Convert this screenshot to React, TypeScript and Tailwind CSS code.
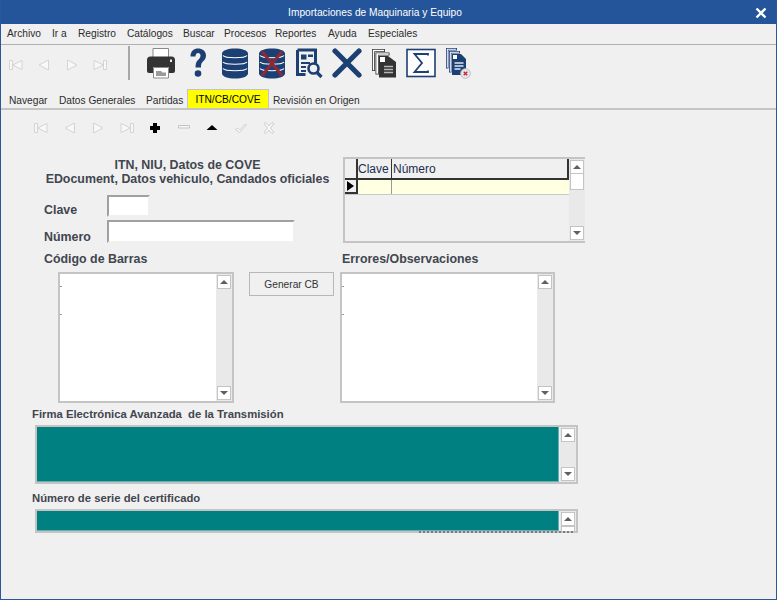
import type { ReactNode } from 'react';

const NAVY = '#1c3f74';
const DARK = '#333333';

const menus = [
  { label: 'Archivo', w: 'w-[45px]' },
  { label: 'Ir a', w: 'w-[26px]' },
  { label: 'Registro', w: 'w-[49px]' },
  { label: 'Catálogos', w: 'w-[56px]' },
  { label: 'Buscar', w: 'w-[41px]' },
  { label: 'Procesos', w: 'w-[51px]' },
  { label: 'Reportes', w: 'w-[53px]' },
  { label: 'Ayuda', w: 'w-[40px]' },
  { label: 'Especiales', w: 'w-[56px]' },
];

function Glyph({ children, w = 16, h = 16 }: { children: ReactNode; w?: number; h?: number }) {
  return (
    <svg width={w} height={h} viewBox={`0 0 ${w} ${h}`} className="block shrink-0">
      {children}
    </svg>
  );
}

// iconos deshabilitados de navegacion
const dim = { fill: '#f8f8f8', stroke: '#d4d4d4', strokeWidth: 1 };

const FirstIcon = () => (
  <Glyph>
    <path d="M1.500 3.500h3v9h-3zM14 3.500v9L4.500 8z" {...dim} />
  </Glyph>
);
const PrevIcon = () => (
  <Glyph>
    <path d="M12.500 3v10L3 8z" {...dim} />
  </Glyph>
);
const NextIcon = () => (
  <Glyph>
    <path d="M3.500 3v10L13 8z" {...dim} />
  </Glyph>
);
const LastIcon = () => (
  <Glyph>
    <path d="M11.500 3.500h3v9h-3zM2 3.500v9L11.500 8z" {...dim} />
  </Glyph>
);
const PlusIcon = () => (
  <Glyph>
    <path d="M6 3h4v3h3v4h-3v3H6v-3H3V6h3z" fill="#000" />
  </Glyph>
);
const MinusIcon = () => (
  <Glyph>
    <path d="M2.500 5.500h11v2.500h-11z" fill="#f8f8f8" stroke="#c4c4c4" />
  </Glyph>
);
const UpIcon = () => (
  <Glyph>
    <path d="M8 5l5.500 5h-11z" fill="#000" />
  </Glyph>
);
const CheckIcon = () => (
  <Glyph>
    <path d="M2.500 9.500l2-1.500 2 2 6-6 1 1-7 7.500z" fill="#f8f8f8" stroke="#cfcfcf" />
  </Glyph>
);
const CancelIcon = () => (
  <Glyph>
    <path d="M3 3.500l2-1 3 3.500 3-3.500 2 1-3.500 4.500 3.500 4.500-2 1-3-3.500-3 3.500-2-1L6.500 8z" fill="#f8f8f8" stroke="#cfcfcf" />
  </Glyph>
);

const PrinterIcon = () => (
  <Glyph w={30} h={32}>
    <path d="M7 1.500h15.500v9H7z" fill="#fff" stroke="#8a8a8a" />
    <path d="M4.500 9.500h21a3.500 3.500 0 0 1 3.500 3.500v11a2 2 0 0 1-2 2h-4v-6H7v6H3a2 2 0 0 1-2-2V13a3.500 3.500 0 0 1 3.500-3.500z" fill={DARK} />
    <rect x="24" y="12.500" width="2" height="2.500" fill="#eee" />
    <path d="M7.500 20.500h15v10.500h-15z" fill="#fff" stroke="#8a8a8a" />
    <path d="M10 24h5l1.500 1.500H20v3.500H10z" fill="#9a9a9a" />
  </Glyph>
);

const DbStack = () => (
  <>
    <path d="M1 6.500C1 3.500 7 1.500 14 1.500s13 2 13 5v20c0 3-6 5-13 5s-13-2-13-5z" fill={NAVY} />
    <path d="M2 8.500c2 3 22 3 24 0M2 15c2 3 22 3 24 0M2 21.500c2 3 22 3 24 0" fill="none" stroke="#fff" strokeWidth="1.200" />
  </>
);
const DbIcon = () => (
  <Glyph w={28} h={33}>
    <DbStack />
  </Glyph>
);
const DbXIcon = () => (
  <Glyph w={28} h={33}>
    <DbStack />
    <path d="M4 4.500l20 24M24 4.500l-20 24" stroke="#8e2a35" strokeWidth="3" />
  </Glyph>
);

const ReportIcon = () => (
  <Glyph w={28} h={31}>
    <path d="M2.500 2h18v13M2.500 2v24.500h8" fill="none" stroke={NAVY} strokeWidth="3" />
    <path d="M6 6.500h5.500v5H6zM13 6.500h5v2.500h-5zM6 14h9v2H6zM6 18h5v2H6zM6 22h5v2H6z" fill={NAVY} />
    <circle cx="18.500" cy="20.500" r="5" fill="#f0f0f0" stroke={NAVY} strokeWidth="2.600" />
    <path d="M22 24.500l4.500 4.500" stroke={NAVY} strokeWidth="3.200" />
  </Glyph>
);

const BigXIcon = () => (
  <Glyph w={30} h={30}>
    <path d="M3 3l24 24M27 3L3 27" stroke={NAVY} strokeWidth="5.200" strokeLinecap="round" />
  </Glyph>
);

const CopiesIcon = () => (
  <Glyph w={26} h={30}>
    <path d="M1 1h13v3H4v19H1z" fill={DARK} />
    <path d="M1.800 1.800h11.400v1.400H3.200v19H1.800z" fill="#fff" />
    <path d="M4.500 4.500h14v3H8v19H4.500z" fill={DARK} />
    <path d="M5.300 5.300h12.400v1.400H7.200v19H5.300z" fill="#fff" />
    <path d="M8 8h9l8 6v15.500H8z" fill={DARK} />
    <path d="M9 9h5v5H9z" fill="#fff" />
    <path d="M13 18.500h9M13 21.500h9M13 24.500h9" stroke="#b5b5b5" strokeWidth="1.600" />
  </Glyph>
);

const SigmaIcon = () => (
  <Glyph w={30} h={30}>
    <rect x="1" y="1.500" width="28" height="27" fill="#fdfdfd" stroke={NAVY} strokeWidth="1.600" />
    <path d="M22 7.500V6H8.500l7.500 9-7.500 9H22v-1.500" fill="none" stroke={NAVY} strokeWidth="1.800" />
  </Glyph>
);

const DocXIcon = () => (
  <Glyph w={26} h={32}>
    <path d="M1 1h11v2.500H3.500v18H1z" fill={NAVY} />
    <path d="M1.800 1.800h9.400v1H2.800v18h-1z" fill="#fff" />
    <path d="M4 4h11v2.500H6.500v19H4z" fill={NAVY} />
    <path d="M4.800 4.800h9.400v1H5.800v19h-1z" fill="#fff" />
    <path d="M7 7h9l5 5v16H7z" fill={NAVY} />
    <path d="M8 8h4v4H8z" fill="#fff" />
    <path d="M9.500 16h9M9.500 19h9M9.500 22h6" stroke="#dfe6f0" strokeWidth="1.300" />
    <circle cx="20.500" cy="26.500" r="4.800" fill="#e8e8e8" stroke="#b8bcc4" />
    <path d="M18.700 24.700l3.600 3.600M22.300 24.700l-3.600 3.600" stroke="#c8283a" strokeWidth="1.400" />
  </Glyph>
);

const Ticks = ({ className }: { className: string }) => (
  <span className={`absolute w-[2px] h-[1px] bg-[#9a9a9a] ${className}`} />
);

function ScrollButton({ down = false, className = '' }: { down?: boolean; className?: string }) {
  return (
    <div className={`w-[14px] h-[14px] bg-white border border-[#c4c4c4] flex items-center justify-center shrink-0 ${className}`}>
      <div
        className={`w-0 h-0 border-l-[4px] border-r-[4px] border-l-transparent border-r-transparent ${
          down ? 'border-t-[4px] border-t-[#606060]' : 'border-b-[4px] border-b-[#606060]'
        }`}
      />
    </div>
  );
}

function ScrollBar({ thumb = false }: { thumb?: boolean }) {
  return (
    <div className="w-[16px] shrink-0 bg-[#e9e9e9] flex flex-col items-center justify-between py-px">
      <div className="flex flex-col">
        <ScrollButton />
        {thumb && <div className="w-[14px] h-[16px] bg-white border border-[#c4c4c4] border-t-0" />}
      </div>
      <ScrollButton down />
    </div>
  );
}

function ListBox({ className }: { className: string }) {
  return (
    <div className={`relative flex border-2 border-[#c4c4c4] bg-white ${className}`}>
      <Ticks className="left-0 top-[12px]" />
      <Ticks className="left-0 top-[40px]" />
      <div className="flex-1" />
      <ScrollBar />
    </div>
  );
}

function TealBox({ className, short = false }: { className: string; short?: boolean }) {
  return (
    <div className={`relative flex border-2 border-[#c4c4c4] bg-[#efefef] w-[543px] ${className}`}>
      <div className="w-[522px] bg-[#008080] shrink-0 border-r border-b border-[#6aaeae]" />
      <div className="w-[2px]" />
      {short ? (
        <>
          <div className="w-[16px] shrink-0 bg-[#e9e9e9] flex flex-col items-center overflow-hidden pt-px">
            <ScrollButton />
            <div className="w-[14px] h-[6px] bg-white border border-[#c4c4c4] shrink-0" />
          </div>
          {/* texto recortado que asoma debajo del campo */}
          <div className="absolute left-[382px] bottom-[-2px] w-[156px] h-[2px] bg-[repeating-linear-gradient(90deg,#55606a_0,#55606a_2px,transparent_2px,transparent_4px)] opacity-70" />
        </>
      ) : (
        <ScrollBar />
      )}
    </div>
  );
}

const labelText = 'font-bold leading-[14px] text-[#41464f] whitespace-nowrap';

export default function App() {
  return (
    <div className="w-[777px] h-[600px] overflow-hidden bg-[#f0f0f0] border-x border-b border-[#2b579a] flex flex-col font-['Liberation_Sans',Arial,sans-serif]">
      <div className="h-[24px] -mx-px bg-[#24549a] flex items-center justify-center relative shrink-0 pr-[27px]">
        <span className="text-white text-[10.2px] pt-px">Importaciones de Maquinaria y Equipo</span>
        <svg width="12" height="12" viewBox="0 0 12 12" className="absolute right-[10px] top-[7px]">
          <path d="M1.500 1.500l9 9M10.500 1.500l-9 9" stroke="#fff" strokeWidth="2.400" />
        </svg>
      </div>

      <div className="h-[20px] flex items-center pl-[6px] border-b border-[#b0b0b0] box-content shrink-0">
        {menus.map((m) => (
          <span key={m.label} className={`${m.w} text-[10.2px] text-[#2c2c2c] whitespace-nowrap`}>
            {m.label}
          </span>
        ))}
      </div>

      <div className="h-[43px] flex items-center shrink-0 pb-[7px] box-border">
        <div className="flex items-center gap-[12px] w-[127px] pl-[7px] pt-[3px]">
          <FirstIcon />
          <PrevIcon />
          <NextIcon />
          <LastIcon />
        </div>
        <div className="w-[2px] h-[34px] bg-[#a8a8a8]" />
        <div className="flex items-center ml-[16px]">
          <div className="w-[43px]"><PrinterIcon /></div>
          <div className="w-[32px]">
            <svg width="18" height="32" viewBox="0 0 18 32" className="block">
              <path d="M1.500 9.500C1.500 4 5 1.500 9 1.500s8 2.500 8 7c0 3.500-2 5-3.500 6.500-1.500 1.500-1.500 3-1.500 5.500H6.500c0-3.500.5-5.500 2.500-7.500 1.500-1.500 2.500-2.500 2.500-4.500 0-1.500-1-2.500-2.500-2.500S6.500 7.500 6.500 9.500z" fill={NAVY} />
              <circle cx="9" cy="26.500" r="3.300" fill={NAVY} />
            </svg>
          </div>
          <div className="w-[37px]"><DbIcon /></div>
          <div className="w-[37px]"><DbXIcon /></div>
          <div className="w-[37px]"><ReportIcon /></div>
          <div className="w-[39px]"><BigXIcon /></div>
          <div className="w-[35px]"><CopiesIcon /></div>
          <div className="w-[39px]"><SigmaIcon /></div>
          <DocXIcon />
        </div>
      </div>

      <div className="h-[20px] flex items-end border-b-2 border-[#c4c4c4] box-content pl-[8px] text-[10.2px] leading-[14px] text-[#2c2c2c] shrink-0">
        <span className="w-[50px]">Navegar</span>
        <span className="w-[87px] whitespace-nowrap">Datos Generales</span>
        <span className="w-[41px]">Partidas</span>
        <span className="w-[82px] h-[19px] mr-[4px] pt-px bg-[#ffff00] border border-b-0 border-[#c4c4c4] flex items-center justify-center text-black whitespace-nowrap">ITN/CB/COVE</span>
        <span className="whitespace-nowrap">Revisión en Origen</span>
      </div>

      <div className="flex items-center gap-[12.5px] mt-[10px] ml-[32px] h-[16px] shrink-0">
        <FirstIcon />
        <PrevIcon />
        <NextIcon />
        <LastIcon />
        <PlusIcon />
        <MinusIcon />
        <UpIcon />
        <CheckIcon />
        <CancelIcon />
      </div>

      <div className="flex mt-[21px] h-[86px] shrink-0">
        <div className="w-[342px] pl-[43px] pt-px text-[12.4px]">
          <div className={`${labelText} w-[287px] text-center`}>
            ITN, NIU, Datos de COVE
            <br />
            EDocument, Datos vehiculo, Candados oficiales
          </div>
          <div className="flex items-center h-[22px] mt-[9px]">
            <span className={`${labelText} w-[63px] pt-[8px]`}>Clave</span>
            <div className="w-[43px] h-[22px] bg-white border-2 border-[#a0a0a0] border-r-[#f0f0f0] border-b-[#f0f0f0]" />
          </div>
          <div className="flex items-center h-[23px] mt-[3px]">
            <span className={`${labelText} w-[63px] pt-[10px]`}>Número</span>
            <div className="w-[188px] h-[23px] bg-white border-2 border-[#a0a0a0] border-r-[#f0f0f0] border-b-[#f0f0f0]" />
          </div>
        </div>
        <div className="w-[242px] h-[86px] flex border-2 border-[#c4c4c4] bg-[#f0f0f0]">
          <div className="w-[224px] shrink-0">
            <div className="h-[21px] flex border-b-2 border-[#333] text-[12px] leading-[20px] text-[#1e2d4f]">
              <div className="w-[13px] border-r-2 border-[#333]" />
              <div className="w-[34px] border-r border-[#333]">Clave</div>
              <div className="flex-1 border-r-2 border-[#333] pl-px">Número</div>
            </div>
            <div className="h-[15px] flex bg-[#ffffe1] border-b border-[#c9c9c9]">
              <div className="w-[13px] bg-[#f0f0f0] border-r-2 border-b-2 border-[#333] flex items-center justify-center">
                <div className="w-0 h-0 border-y-[5px] border-y-transparent border-l-[7px] border-l-black" />
              </div>
              <div className="w-[34px] border-r border-[#999]" />
              <div className="flex-1" />
            </div>
          </div>
          <div className="w-[1px]" />
          <ScrollBar thumb />
        </div>
      </div>

      <div className="flex mt-[9px] h-[14px] shrink-0 pl-[43px] text-[12.4px]">
        <span className={`${labelText} w-[298px]`}>Código de Barras</span>
        <span className={labelText}>Errores/Observaciones</span>
      </div>

      <div className="flex mt-[6px] pl-[57px] shrink-0">
        <ListBox className="w-[176px] h-[131px]" />
        <div className="w-[85px] h-[24px] ml-[15px] mr-[6px] pt-px bg-[#f0f0f0] border border-[#b8b8b8] flex items-center justify-center text-[10.2px] text-[#333]">
          Generar CB
        </div>
        <ListBox className="w-[215px] h-[131px]" />
      </div>

      <div className={`${labelText} text-[11.3px] mt-[4px] ml-[31px] h-[14px]`}>Firma Electrónica Avanzada&nbsp; de la Transmisión</div>
      <TealBox className="mt-[4px] ml-[34px] h-[59px] shrink-0" />
      <div className={`${labelText} text-[11.3px] mt-[7px] ml-[31px] h-[14px]`}>Número de serie del certificado</div>
      <TealBox short className="mt-[4px] ml-[34px] h-[24px] shrink-0" />
    </div>
  );
}
